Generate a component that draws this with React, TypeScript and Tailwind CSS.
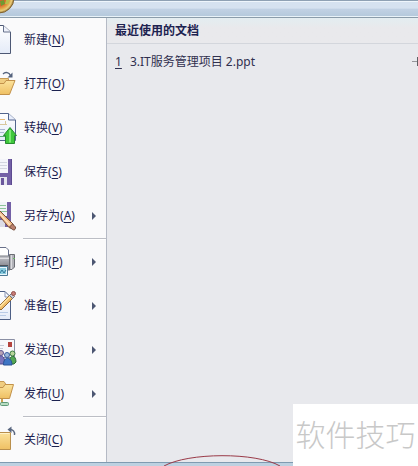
import React from 'react';

interface MenuEntry {
  label: string;
  accessKey: string;
  icon: React.ReactNode;
  hasSubmenu?: boolean;
}

function IconFrame({ children }: { children: React.ReactNode }) {
  return (
    <svg viewBox="0 0 18 44" className="h-11 w-[18px] shrink-0" fill="none" aria-hidden="true">
      {children}
    </svg>
  );
}

function Gradients() {
  return (
    <svg className="absolute h-0 w-0" aria-hidden="true">
      <defs>
        <linearGradient id="paper" x1="0" y1="0" x2="0" y2="1">
          <stop offset="0" stopColor="#ffffff" />
          <stop offset="1" stopColor="#e4ebf8" />
        </linearGradient>
        <linearGradient id="folder" x1="0" y1="0" x2="0" y2="1">
          <stop offset="0" stopColor="#fbe29c" />
          <stop offset="1" stopColor="#efc063" />
        </linearGradient>
        <linearGradient id="printer" x1="0" y1="0" x2="0" y2="1">
          <stop offset="0" stopColor="#c9cacf" />
          <stop offset="0.4" stopColor="#a3a4ab" />
          <stop offset="1" stopColor="#77777f" />
        </linearGradient>
        <radialGradient id="orb" cx="0.5" cy="0.5" r="0.5">
          <stop offset="0.5" stopColor="#e0602c" />
          <stop offset="0.72" stopColor="#e2a648" />
          <stop offset="0.86" stopColor="#e8cb78" />
          <stop offset="1" stopColor="#9c7434" />
        </radialGradient>
      </defs>
    </svg>
  );
}

const NewIcon = () => (
  <IconFrame>
    <path d="M-3 7.500H3.500L10.500 14V35.500H-3Z" fill="url(#paper)" stroke="#4d5874" />
    <path d="M3.500 7.500V14H10.500" fill="#eef1fa" stroke="#66718c" />
  </IconFrame>
);

const OpenIcon = () => (
  <IconFrame>
    <path d="M-2 16.500H8.500V28H-2Z" fill="#f0cd80" stroke="#c69a55" />
    <path d="M-2 21.500H4L6 18.500H15L9.500 32.500H-2Z" fill="url(#folder)" stroke="#c2914a" />
    <path d="M3 12C5.500 9.500 9 10.500 10.500 13.500" stroke="#55637e" strokeWidth="1.400" />
    <path d="M12.500 10.500V15.500H7.500Z" fill="#55637e" />
  </IconFrame>
);

const ConvertIcon = () => (
  <IconFrame>
    <path d="M-2 7.500H8.500L15.500 14V34.500H-2Z" fill="url(#paper)" stroke="#52658e" />
    <path d="M8.500 7.500V14H15.500" fill="#e9eefb" stroke="#52658e" />
    <path d="M0 13.500H5" stroke="#e7b878" />
    <path d="M0 18.500H7M5.500 15V19" stroke="#d8c79d" />
    <path d="M0 23.500H5M0 26.500H4" stroke="#a9b6cf" />
    <path d="M0 30.500H5" stroke="#5cab77" />
    <path d="M10 21.500L16.500 29.500H14.500V37.500H5.500V29.500H3.500Z" fill="#3fc83c" stroke="#278a30" />
    <path d="M10 24V36.500" stroke="#7ce876" strokeWidth="2" />
  </IconFrame>
);

const SaveIcon = () => (
  <IconFrame>
    <path d="M-1 9H12V35H1L-1 33Z" fill="#7360a6" />
    <path d="M11.500 9V35" stroke="#5d4a90" />
    <path d="M0 9H8V23H0Z" fill="#f4f5fa" />
    <path d="M0 12.500H7M0 15.500H7M0 18.500H7" stroke="#d2d5df" />
    <path d="M0 27H7V35H0Z" fill="#e4e5ee" />
    <path d="M1 28H4V35H1Z" fill="#6a579c" />
  </IconFrame>
);

const SaveAsIcon = () => (
  <IconFrame>
    <path d="M-1 8H11V33H-1Z" fill="#7360a6" />
    <path d="M0 8H7V22H0Z" fill="#f1f4f7" />
    <path d="M0 11.500H6M0 14.500H6M1 17.500H7" stroke="#8cc49b" />
    <path d="M0 26H5V33H0Z" fill="#dcdce7" />
    <path d="M-3 19L0 17L13 30L14.500 35.500L9 33.500Z" fill="#f0bd8d" stroke="#7b4e38" />
    <path d="M0 20L10 31" stroke="#ffe0bd" strokeWidth="1.500" />
    <path d="M9.500 33L12.500 30L15.500 33C16 36 13.500 36.500 12.500 35.500Z" fill="#b97f6e" stroke="#76503f" />
  </IconFrame>
);

const PrintIcon = () => (
  <IconFrame>
    <path d="M-1 7.500H6L8.500 10V17H-1Z" fill="#ffffff" stroke="#68708a" />
    <path d="M-1 16H10V30H-1Z" fill="url(#printer)" stroke="#777a82" />
    <path d="M9.500 14.500H14.500V27L12 29.500H9.500Z" fill="#b1b2b8" stroke="#6b6d74" />
    <path d="M11.500 15V29" stroke="#dcdce0" />
    <path d="M0 18.500H9" stroke="#dfdfe3" />
    <path d="M13 18.500H15" stroke="#6bb866" />
    <path d="M0 25.500H8" stroke="#4f5158" />
    <path d="M-1 26.500H7.500V35.500H-1Z" fill="#e9f6fc" stroke="#4c7893" />
    <path d="M0 28H6V34H0Z" fill="#8accdf" />
    <path d="M0 33L2 30L4 33L6 30" stroke="#327799" />
  </IconFrame>
);

const PrepareIcon = () => (
  <IconFrame>
    <path d="M-1 7.500H5L10.500 13V35.500H-1Z" fill="url(#paper)" stroke="#4d5f85" />
    <path d="M5 7.500V13H10" stroke="#8794b5" />
    <path d="M0 28.500H8M0 31.500H6" stroke="#b9cbe6" />
    <path d="M-2 23L10.500 10.500L13.500 13.500L1 26Z" fill="#f0bf6c" stroke="#94662e" />
    <path d="M0 22.500L11.500 11" stroke="#ffe6a5" strokeWidth="1.500" />
    <path d="M9.500 11.500L11.500 9.500L14.500 12.500L12.500 14.500Z" fill="#c8ccd5" stroke="#6e7180" />
    <circle cx="13.500" cy="9.500" r="2" fill="#c87a76" stroke="#94534d" />
  </IconFrame>
);

const SendIcon = () => (
  <IconFrame>
    <path d="M-1 11.500H14.500V29.500H-1Z" fill="#f8f8fb" stroke="#8a8fa4" />
    <path d="M8 14H12V19H8Z" fill="#b4443f" />
    <path d="M0 17.500H4M0 20.500H3" stroke="#c5cad6" />
    <path d="M-3 36C-3 25 5 25 5 36Z" fill="#7a74bb" stroke="#4d488b" />
    <circle cx="1" cy="25" r="2.500" fill="#b9a4b4" stroke="#5d5793" />
    <path d="M9 36C9 26 16 26 16 34L14 36Z" fill="#53a653" stroke="#2d6b37" />
    <circle cx="12.500" cy="25.500" r="2.500" fill="#b7d49a" stroke="#3b7d42" />
    <path d="M3.500 37C3 28 12 28 12 37Z" fill="#3e75c4" stroke="#2b5396" />
    <circle cx="7" cy="27" r="2.500" fill="#9db9da" stroke="#3a5ea2" />
  </IconFrame>
);

const PublishIcon = () => (
  <IconFrame>
    <path d="M-1 9.500H4L6 12.500H9.500V24H-1Z" fill="#f0cd80" stroke="#c69a55" />
    <path d="M-2 15.500H3L5 12.500H13.500L9.500 26.500H-2Z" fill="url(#folder)" stroke="#c2914a" />
    <path d="M2 27V31" stroke="#cba04f" strokeWidth="2" />
    <rect x="0.500" y="30.500" width="8" height="3" rx="1" fill="#b8dcc1" stroke="#5f9a7a" />
  </IconFrame>
);

const CloseIcon = () => (
  <IconFrame>
    <path d="M-1 14.500H10.500V31.500H-1Z" fill="url(#folder)" stroke="#b98f4c" />
    <path d="M0 15.500H9.500" stroke="#fff2c8" />
    <path d="M14.500 17C15 13.500 13 11.500 10 11.500" stroke="#5a6780" strokeWidth="1.400" />
    <path d="M7.500 11.500L11.500 8.500V15Z" fill="#5a6780" />
  </IconFrame>
);

const menuGroups: MenuEntry[][] = [
  [
    { label: '新建', accessKey: 'N', icon: <NewIcon /> },
    { label: '打开', accessKey: 'O', icon: <OpenIcon /> },
    { label: '转换', accessKey: 'V', icon: <ConvertIcon /> },
    { label: '保存', accessKey: 'S', icon: <SaveIcon /> },
    { label: '另存为', accessKey: 'A', icon: <SaveAsIcon />, hasSubmenu: true },
  ],
  [
    { label: '打印', accessKey: 'P', icon: <PrintIcon />, hasSubmenu: true },
    { label: '准备', accessKey: 'E', icon: <PrepareIcon />, hasSubmenu: true },
    { label: '发送', accessKey: 'D', icon: <SendIcon />, hasSubmenu: true },
    { label: '发布', accessKey: 'U', icon: <PublishIcon />, hasSubmenu: true },
  ],
  [{ label: '关闭', accessKey: 'C', icon: <CloseIcon /> }],
];

const recentDocuments = ['3.IT服务管理项目 2.ppt'];

function MenuItem({ entry }: { entry: MenuEntry }) {
  return (
    <button
      type="button"
      aria-haspopup={entry.hasSubmenu ? 'menu' : undefined}
      className="flex h-11 w-full items-center gap-1.5 pr-2.5 text-left hover:bg-[#ffe9a8]"
    >
      {entry.icon}
      <span className="flex-1 whitespace-nowrap">
        {entry.label}(<u className="underline-offset-2">{entry.accessKey}</u>)
      </span>
      {entry.hasSubmenu && (
        <svg viewBox="0 0 4 8" className="h-2 w-1 shrink-0" aria-hidden="true">
          <path d="M0 0L4 4L0 8Z" fill="#4c5672" />
        </svg>
      )}
    </button>
  );
}

function RecentDocuments() {
  return (
    <section className="min-w-0 flex-1 bg-[#e8e9ed]">
      <h2 className="flex h-[26px] items-center border-b border-[#d3d6dc] bg-linear-to-b from-[#e3edf1] to-[#e9e9ec] to-40% pl-2 font-bold">
        最近使用的文档
      </h2>
      <ol className="pt-2">
        {recentDocuments.map((name, i) => (
          <li key={name} className="flex h-5 items-center">
            <button type="button" className="flex flex-1 gap-2 pl-2 text-left text-[#30304f]">
              <u className="underline-offset-2">{i + 1}</u>
              <span>{name}</span>
            </button>
            <button type="button" aria-label="固定" className="shrink-0">
              <svg viewBox="0 0 7 12" className="h-3 w-[7px]" aria-hidden="true">
                <path d="M1 5.500H6" stroke="#96969b" />
                <path d="M6.500 1V10" stroke="#606065" />
              </svg>
            </button>
          </li>
        ))}
      </ol>
    </section>
  );
}

export default function App() {
  return (
    <main className="relative overflow-hidden font-['Noto_Sans','Noto_Sans_CJK_SC',sans-serif] text-xs text-[#1c2250]">
      <Gradients />
      <header className="h-[18px] border-t border-b border-t-[#8fa1b4] border-b-[#8b9caa] bg-linear-to-b from-[#d6e2f0] from-45% via-[#c1d1e4] via-50% to-[#b3c8db] shadow-[inset_0_1px_0_#eff6fc,inset_0_-1px_0_#e8f2f8]" />
      <svg viewBox="0 0 15 15" className="absolute top-0 left-0 h-[15px] w-[15px]" aria-hidden="true">
        <circle cx="-1" cy="-2" r="15" fill="url(#orb)" stroke="#80632f" />
        <path d="M0 1L4 0L5 4L1 6Z" fill="#6f9b33" />
        <path d="M6 0H10L8 4L5 4Z" fill="#b9bf49" />
      </svg>

      <div className="flex">
        <nav className="w-[107px] shrink-0 border-r border-[#b5bac5] bg-[#fafafb]">
          {menuGroups.map((group, i) => (
            <React.Fragment key={i}>
              {i > 0 && <hr className="ml-[23px] h-0.5 border-t border-b border-t-[#bcbec5] border-b-white" />}
              {group.map(entry => (
                <MenuItem key={entry.accessKey} entry={entry} />
              ))}
            </React.Fragment>
          ))}
        </nav>
        <RecentDocuments />
      </div>

      <footer className="h-1 border-t border-[#7f9bb1] bg-[#bdd1e1]" />

      <svg viewBox="0 0 120 12" className="absolute bottom-0 left-[163px] h-3 w-[120px]" fill="none" aria-hidden="true">
        <path d="M1 12C25 -1.500 93 -2 117 12" stroke="#9a3a48" />
      </svg>
      <div className="absolute right-0 bottom-0 flex h-[62px] w-[125px] items-center justify-center bg-white text-3xl font-light whitespace-nowrap text-[#c8c8c8]">
        软件技巧
      </div>
    </main>
  );
}
